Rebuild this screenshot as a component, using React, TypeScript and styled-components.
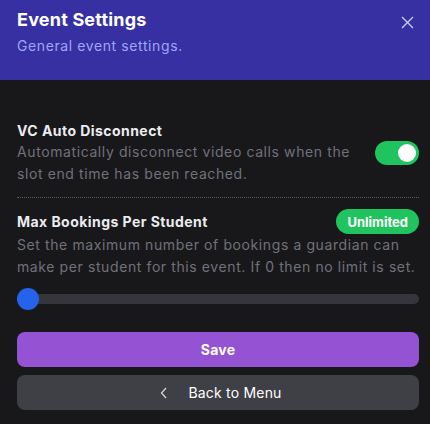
import React from "react";
import styled, { createGlobalStyle } from "styled-components";

const GlobalStyle = createGlobalStyle`
  html, body {
    margin: 0;
    padding: 0;
    background: #18181b;
  }
  body {
    font-family: "Inter", "Noto Sans", sans-serif;
    -webkit-font-smoothing: antialiased;
  }
`;

const Panel = styled.div`
  width: 430px;
  height: 424px;
  display: flex;
  flex-direction: column;
  background-color: #18181b;
`;

const Header = styled.div`
  height: 80px;
  box-sizing: border-box;
  padding: 6px 17px 0 17px;
  background-color: #3730a3;
  display: flex;
  justify-content: space-between;
  align-items: flex-start;
`;

const HeaderText = styled.div`
  display: flex;
  flex-direction: column;
`;

const Title = styled.div`
  font-size: 18px;
  font-weight: 700;
  line-height: 28px;
  letter-spacing: 0.2px;
  color: #ffffff;
`;

const Subtitle = styled.div`
  margin-top: 2px;
  font-size: 14px;
  line-height: 20px;
  letter-spacing: 0.6px;
  color: #9ea6f6;
`;

const CloseButton = styled.div`
  margin-top: 8px;
  margin-right: -2px;
  width: 16px;
  height: 16px;
  display: flex;
  align-items: center;
  justify-content: center;
  color: #c7cbf7;
`;

const Body = styled.div`
  padding: 41px 11px 0 17px;
  display: flex;
  flex-direction: column;
`;

const SettingRow = styled.div`
  display: flex;
  align-items: center;
  justify-content: space-between;
  gap: 16px;
  padding-bottom: 12px;
  border-bottom: 1px dotted #5b5b63;
`;

const SettingText = styled.div`
  display: flex;
  flex-direction: column;
`;

const SettingTitle = styled.div`
  font-size: 14px;
  font-weight: 700;
  line-height: 20px;
  letter-spacing: 0.45px;
  color: #ececef;
`;

const SettingDesc = styled.div`
  font-size: 14px;
  line-height: 22px;
  letter-spacing: 0.6px;
  color: #71717a;
  white-space: nowrap;
`;

const Toggle = styled.div<{ $on: boolean }>`
  flex: none;
  width: 44px;
  height: 24px;
  border-radius: 12px;
  background-color: ${(p) => (p.$on ? "#1fc45e" : "#3f3f46")};
  display: flex;
  align-items: center;
  justify-content: ${(p) => (p.$on ? "flex-end" : "flex-start")};
  padding: 0 3px;
  box-sizing: border-box;
`;

const Knob = styled.div`
  width: 18px;
  height: 18px;
  border-radius: 50%;
  background: #ffffff;
`;

const Section = styled.div`
  padding-top: 11px;
  display: flex;
  flex-direction: column;
`;

const SectionHead = styled.div`
  height: 25px;
  display: flex;
  align-items: center;
  justify-content: space-between;
`;

const Badge = styled.div`
  height: 25px;
  padding: 0 11px;
  border-radius: 13px;
  background-color: #1fc45e;
  color: #ffffff;
  font-size: 13px;
  font-weight: 700;
  display: flex;
  align-items: center;
`;

const Slider = styled.div`
  margin-top: 10px;
  height: 22px;
  display: flex;
  align-items: center;
  position: relative;
`;

const Track = styled.div`
  flex: 1;
  height: 10px;
  border-radius: 5px;
  background-color: #35353b;
`;

const Thumb = styled.div`
  position: absolute;
  left: 0;
  top: 0;
  width: 22px;
  height: 22px;
  border-radius: 50%;
  background-color: #2563eb;
`;

const Actions = styled.div`
  margin-top: 22px;
  display: flex;
  flex-direction: column;
  gap: 8px;
`;

const Button = styled.button<{ $variant: "primary" | "secondary" }>`
  height: 35px;
  border: 0;
  border-radius: 8px;
  font-family: inherit;
  font-size: 14px;
  font-weight: ${(p) => (p.$variant === "primary" ? 700 : 400)};
  letter-spacing: 0.2px;
  color: #ffffff;
  background-color: ${(p) => (p.$variant === "primary" ? "#9353d3" : "#3f3f46")};
  display: flex;
  align-items: center;
  justify-content: center;
  gap: 20px;
`;

const Chevron = styled.span`
  display: flex;
  margin-left: 6px;
  color: #d4d4d8;
`;

export default function App() {
  return (
    <>
      <GlobalStyle />
      <Panel>
        <Header>
          <HeaderText>
            <Title>Event Settings</Title>
            <Subtitle>General event settings.</Subtitle>
          </HeaderText>
          <CloseButton>
            <svg width="13" height="13" viewBox="0 0 13 13" fill="none">
              <path d="M1 1L12 12M12 1L1 12" stroke="currentColor" strokeWidth="1.4" />
            </svg>
          </CloseButton>
        </Header>
        <Body>
          <SettingRow>
            <SettingText>
              <SettingTitle>VC Auto Disconnect</SettingTitle>
              <SettingDesc>
                Automatically disconnect video calls when the
                <br />
                slot end time has been reached.
              </SettingDesc>
            </SettingText>
            <Toggle $on>
              <Knob />
            </Toggle>
          </SettingRow>
          <Section>
            <SectionHead>
              <SettingTitle>Max Bookings Per Student</SettingTitle>
              <Badge>Unlimited</Badge>
            </SectionHead>
            <SettingDesc>
              Set the maximum number of bookings a guardian can
              <br />
              make per student for this event. If 0 then no limit is set.
            </SettingDesc>
            <Slider>
              <Track />
              <Thumb />
            </Slider>
          </Section>
          <Actions>
            <Button $variant="primary">Save</Button>
            <Button $variant="secondary">
              <Chevron>
                <svg width="8" height="12" viewBox="0 0 8 12" fill="none">
                  <path d="M6 1L1.5 6L6 11" stroke="currentColor" strokeWidth="1.3" />
                </svg>
              </Chevron>
              Back to Menu
            </Button>
          </Actions>
        </Body>
      </Panel>
    </>
  );
}
